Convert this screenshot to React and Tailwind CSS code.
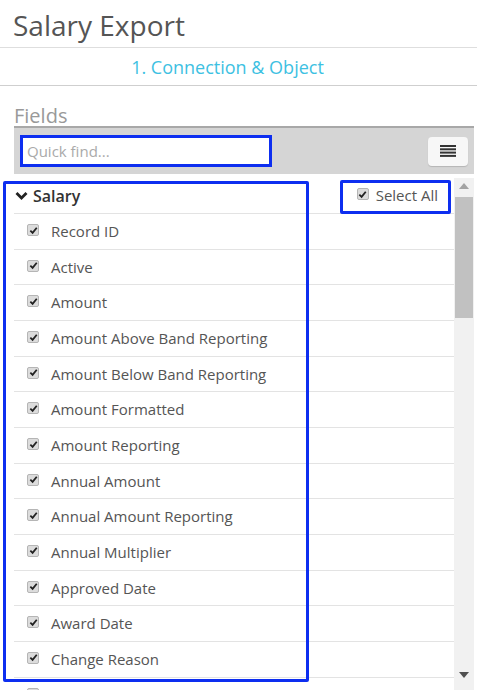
import React from "react";

const items = [
  "Record ID",
  "Active",
  "Amount",
  "Amount Above Band Reporting",
  "Amount Below Band Reporting",
  "Amount Formatted",
  "Amount Reporting",
  "Annual Amount",
  "Annual Amount Reporting",
  "Annual Multiplier",
  "Approved Date",
  "Award Date",
  "Change Reason",
  "Comments",
];

function Check() {
  return (
    <span className="inline-flex h-[12px] w-[12px] shrink-0 items-center justify-center rounded-[2px] border border-[#b5b5b5] bg-[#dcdcdc]">
      <svg width="9" height="9" viewBox="0 0 10 10">
        <path d="M1.5 5.2 L4 7.6 L8.6 2" fill="none" stroke="#222" strokeWidth="2" />
      </svg>
    </span>
  );
}

export default function App() {
  return (
    <div
      className="relative h-[690px] w-[477px] overflow-hidden bg-white text-[#555]"
      style={{ fontFamily: '"Open Sans", "Noto Sans", sans-serif' }}
    >
      <div className="h-[48px] border-b border-[#dedede] pl-[13px] pt-[6px] text-[28px] leading-[38px] text-[#555]">
        Salary Export
      </div>
      <div className="flex h-[38px] items-center justify-center border-b border-[#cfcfcf] pr-[22px] pt-[2px] text-[18px] text-[#3dc1e2]">
        1. Connection &amp; Object
      </div>
      <div className="ml-[14px] mr-[3px]">
        <div className="h-[42px] border-b-2 border-[#a8a8a8] pt-[16px] text-[20px] leading-[28px] text-[#999]">
          Fields
        </div>
        <div className="flex h-[46px] items-center justify-between bg-[#d5d5d5] pl-[6px] pr-[6px]">
          <div className="flex h-[32px] w-[252px] items-center border-[3px] border-[#0d2ef0] bg-white pl-[4px] text-[15px] text-[#aaa]">
            Quick find...
          </div>
          <div className="flex h-[29px] w-[40px] items-center justify-center rounded-[4px] bg-[#f7f7f7] shadow-[0_1px_1px_rgba(0,0,0,0.15)]">
            <svg width="16" height="12" viewBox="0 0 16 12">
              <rect x="0" y="0" width="16" height="2" fill="#333" />
              <rect x="0" y="3.3" width="16" height="2" fill="#333" />
              <rect x="0" y="6.6" width="16" height="2" fill="#333" />
              <rect x="0" y="9.9" width="16" height="2" fill="#333" />
            </svg>
          </div>
        </div>
        <div className="flex h-[516px]">
          <div className="flex-1 overflow-hidden">
            <div className="flex h-[40px] items-center justify-between border-b border-[#e3e3e3] pr-[16px]">
              <div className="flex items-center gap-[5px] pl-[1px] pt-[4px] text-[16px] font-semibold text-[#333]">
                <svg width="13" height="10" viewBox="0 0 13 10">
                  <path d="M1.5 2 L6.5 7 L11.5 2" fill="none" stroke="#222" strokeWidth="2.8" />
                </svg>
                Salary
              </div>
              <div className="flex items-center gap-[7px] pt-[4px] text-[15px] text-[#555]">
                <span className="-mt-[5px]">
                  <Check />
                </span>
                Select All
              </div>
            </div>
            {items.map((it) => (
              <div
                key={it}
                className="flex h-[35.67px] items-center gap-[12px] border-b border-[#e3e3e3] pl-[13px] text-[15px] text-[#555]"
              >
                <span className="-mt-[5px]">
                  <Check />
                </span>
                <span>{it}</span>
              </div>
            ))}
          </div>
          <div className="relative mt-[4px] w-[20px] bg-[#f1f1f1]">
            <svg className="absolute left-[5px] top-[5px]" width="10" height="6" viewBox="0 0 10 6">
              <path d="M0 6 L5 0 L10 6 Z" fill="#a3a3a3" />
            </svg>
            <div className="absolute left-[1px] right-[1px] top-[19px] h-[121px] bg-[#c1c1c1]" />
            <svg className="absolute left-[5px] top-[494px]" width="10" height="6" viewBox="0 0 10 6">
              <path d="M0 0 L5 6 L10 0 Z" fill="#505050" />
            </svg>
          </div>
        </div>
      </div>
      <div className="pointer-events-none absolute left-[3px] top-[181px] h-[501px] w-[306px] rounded-[2px] border-[3px] border-[#0d2ef0]" />
      <div className="pointer-events-none absolute left-[340px] top-[180px] h-[34px] w-[111px] rounded-[2px] border-[3px] border-[#0d2ef0]" />
    </div>
  );
}
